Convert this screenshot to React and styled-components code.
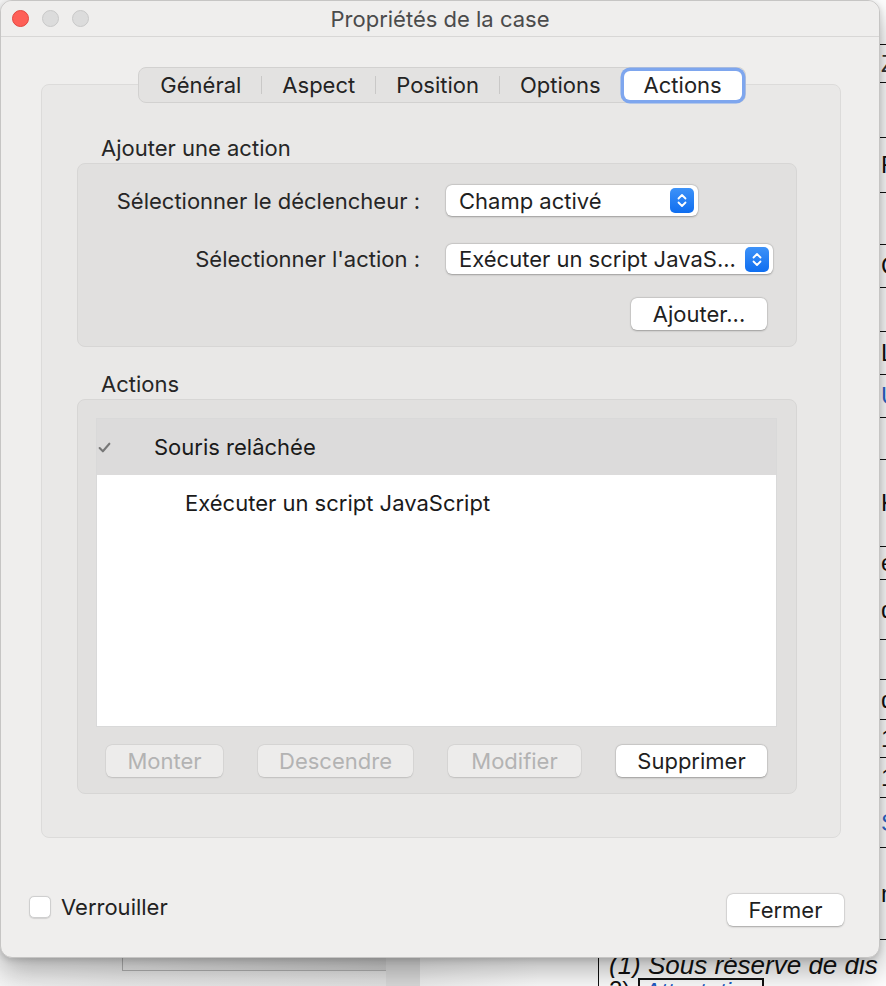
import React from 'react';
import styled, { createGlobalStyle } from 'styled-components';

const GlobalStyle = createGlobalStyle`
  html, body { margin: 0; padding: 0; }
  body {
    width: 886px;
    height: 986px;
    overflow: hidden;
    font-family: Inter, "Noto Sans", "Liberation Sans", sans-serif;
    -webkit-font-smoothing: antialiased;
  }
  * { box-sizing: border-box; }
`;

const Stage = styled.div`
  position: relative;
  width: 886px;
  height: 986px;
  overflow: hidden;
`;

/* ---------- background application (document behind the dialog) ---------- */
const Backdrop = styled.div`
  display: flex;
  height: 100%;
`;

const SidePane = styled.div`
  flex: none;
  width: 386px;
  padding-left: 122px;
  background: linear-gradient(to right, #f7f7f7 0, #ededed 122px, #e6e6e6 100%);
`;

const Frame = styled.div`
  height: 971px;
  border-left: 1.5px solid #b3b3b3;
  border-bottom: 1.5px solid #b3b3b3;
  background: linear-gradient(to right, #ececec, #d3d3d3);
`;

const Strip = styled.div`
  flex: none;
  width: 34px;
  background: #dddddd;
`;

const Doc = styled.div`
  flex: 1;
  min-width: 0;
  overflow: hidden;
  background: linear-gradient(to right, #f2f2f2, #ffffff 120px);
  padding-left: 178px;
`;

const DocTable = styled.div`
  height: 100%;
  border-left: 1.5px solid #111;
  background: #fff;
  display: flex;
  flex-direction: column;
`;

const DocRow = styled.div`
  flex: none;
  height: ${p => p.$h}px;
  border-bottom: ${p => (p.$line ? '1.5px solid #111' : 'none')};
  padding-left: ${p => p.$pad ?? 282}px;
  display: flex;
  align-items: ${p => p.$align || 'center'};
  white-space: nowrap;
  overflow: hidden;
  font-family: "Liberation Sans", Arial, sans-serif;
  font-size: ${p => p.$size || 24}px;
  line-height: 1;
  font-style: ${p => (p.$italic ? 'italic' : 'normal')};
  color: ${p => p.$color || '#111'};
`;

const NoteLink = styled.span`
  margin-left: 8px;
  border: 2px solid #111;
  border-bottom: none;
  padding: 0 4px;
  color: #1e5bc6;
  font-style: italic;
  text-decoration: underline;
`;

/* ---------- dialog window ---------- */
const Window = styled.div`
  position: absolute;
  top: 0;
  left: 0;
  width: 880px;
  height: 958px;
  background: #efeeed;
  border: 1px solid #c6c5c4;
  border-radius: 12px;
  box-shadow: 0 14px 30px rgba(0, 0, 0, 0.3), 0 2px 6px rgba(0, 0, 0, 0.15);
  display: flex;
  flex-direction: column;
  overflow: hidden;
  color: #242424;
`;

const TitleBar = styled.div`
  height: 36px;
  flex: none;
  display: grid;
  grid-template-columns: 1fr auto 1fr;
  align-items: center;
  border-bottom: 1px solid #d8d7d6;
  background: #efeeed;
`;

const Lights = styled.div`
  display: flex;
  gap: 13px;
  padding-left: 11px;
`;

const Light = styled.span`
  width: 17px;
  height: 17px;
  border-radius: 50%;
  background: ${p => p.$color};
  border: 1px solid ${p => p.$edge};
`;

const Title = styled.div`
  font-size: 22px;
  color: #4b4b4b;
`;

const Body = styled.div`
  flex: 1;
  display: flex;
  flex-direction: column;
  padding: 30px 38px 0 40px;
`;

const TabStrip = styled.div`
  display: flex;
  justify-content: center;
  margin-bottom: -19px;
  position: relative;
  z-index: 1;
`;

const Segmented = styled.div`
  display: flex;
  align-items: center;
  height: 36px;
  padding: 0 3px 0 1px;
  background: #e3e2e1;
  border: 1px solid #d2d1d0;
  border-radius: 8px;
  margin-left: 2px;
`;

const Tab = styled.div`
  height: 29px;
  padding: 0 20px;
  display: flex;
  align-items: center;
  font-size: 22px;
  color: #232323;
  border-radius: 6px;
  background: ${p => (p.$active ? '#ffffff' : 'transparent')};
  box-shadow: ${p => (p.$active ? '0 0 0 3.5px #7ea6ee, 0 1px 2px rgba(0,0,0,0.2)' : 'none')};
  margin-left: ${p => (p.$active ? '3px' : '0')};
`;

const TabDivider = styled.span`
  width: 1px;
  height: 18px;
  background: #c9c8c7;
`;

const Panel = styled.div`
  height: 754px;
  background: #e9e8e7;
  border: 1px solid #dcdbda;
  border-radius: 8px;
  padding: 51px 43px 0 35px;
  display: flex;
  flex-direction: column;
`;

const SectionLabel = styled.div`
  font-size: 22px;
  line-height: 24px;
  margin-left: 24px;
  margin-top: ${p => p.$top || 0}px;
  margin-bottom: 3px;
  color: #262626;
`;

const GroupBox = styled.div`
  background: #e1e0df;
  border: 1px solid #d7d6d5;
  border-radius: 8px;
  padding: ${p => p.$pad};
  display: flex;
  flex-direction: column;
`;

const FormRow = styled.div`
  display: grid;
  grid-template-columns: 342px auto;
  column-gap: 26px;
  align-items: center;
  margin-top: ${p => p.$top || 0}px;
`;

const FieldLabel = styled.div`
  text-align: right;
  font-size: 22px;
  color: #262626;
  white-space: nowrap;
`;

const Popup = styled.div`
  width: ${p => p.$w}px;
  height: ${p => p.$h}px;
  background: #fff;
  border-radius: 6px;
  box-shadow: 0 0.5px 2px rgba(0, 0, 0, 0.28), 0 0 0 0.5px rgba(0, 0, 0, 0.08);
  display: flex;
  align-items: center;
  justify-content: space-between;
  padding: 0 4px 0 13px;
  font-size: 22px;
  color: #1f1f1f;
  white-space: nowrap;
`;

const Stepper = styled.span`
  width: 24px;
  height: 25px;
  flex: none;
  border-radius: 5px;
  background: linear-gradient(#3d92f8, #0f6ef0);
  display: flex;
  align-items: center;
  justify-content: center;
`;

const RightRow = styled.div`
  display: flex;
  justify-content: flex-end;
  margin-top: ${p => p.$top || 0}px;
`;

const PushButton = styled.div`
  width: ${p => p.$w}px;
  height: 32px;
  border-radius: 6px;
  display: flex;
  align-items: center;
  justify-content: center;
  font-size: 22px;
  background: ${p => (p.$disabled ? '#edeceb' : '#ffffff')};
  color: ${p => (p.$disabled ? '#b3b3b3' : '#1f1f1f')};
  box-shadow: ${p =>
    p.$disabled
      ? '0 0.5px 1.5px rgba(0,0,0,0.12), 0 0 0 0.5px rgba(0,0,0,0.05)'
      : '0 0.5px 2px rgba(0,0,0,0.28), 0 0 0 0.5px rgba(0,0,0,0.08)'};
`;

const ActionList = styled.div`
  height: 309px;
  background: #fff;
  border: 1px solid #d9d9d9;
  display: flex;
  flex-direction: column;
`;

const ListRow = styled.div`
  height: 56px;
  flex: none;
  display: flex;
  align-items: center;
  padding-left: ${p => p.$indent}px;
  background: ${p => (p.$selected ? '#dcdbdb' : 'transparent')};
  font-size: 22px;
  color: #1a1a1a;
`;

const Check = styled.svg`
  width: 13px;
  height: 13px;
  margin-right: 43px;
`;

const ButtonRow = styled.div`
  display: flex;
  justify-content: space-between;
  padding: 0 10px;
  margin-top: 18px;
`;

const Footer = styled.div`
  display: flex;
  justify-content: space-between;
  align-items: center;
  margin: 56px -3px 0 -12px;
`;

const CheckLabel = styled.label`
  display: flex;
  align-items: center;
  gap: 10px;
  font-size: 22px;
  color: #222;
  margin-top: -6px;
`;

const CheckBox = styled.span`
  width: 22px;
  height: 22px;
  border-radius: 5px;
  background: #fff;
  border: 1px solid #cfcfcf;
  box-shadow: 0 0.5px 1px rgba(0, 0, 0, 0.12);
`;

const docRows = [
  { h: 45, ch: '' },
  { h: 38, ch: 'Z', color: '#333' },
  { h: 55, ch: '' },
  { h: 55, ch: 'F' },
  { h: 52, ch: '' },
  { h: 43, ch: 'C' },
  { h: 44, ch: '' },
  { h: 43, ch: 'L' },
  { h: 43, ch: 'U', color: '#2a66c9' },
  { h: 42, ch: '' },
  { h: 87, ch: 'K' },
  { h: 33, ch: 'é' },
  { h: 60, ch: 'd' },
  { h: 40, ch: '' },
  { h: 40, ch: 'd' },
  { h: 38, ch: '1' },
  { h: 40, ch: '1' },
  { h: 50, ch: 'S', color: '#2a66c9' },
  { h: 92, ch: 'n' },
];

const Chevrons = () => (
  <svg width="12" height="17" viewBox="0 0 12 17">
    <path d="M2.5 6.5 L6 3 L9.5 6.5" fill="none" stroke="#fff" strokeWidth="1.8" strokeLinecap="round" strokeLinejoin="round" />
    <path d="M2.5 10.5 L6 14 L9.5 10.5" fill="none" stroke="#fff" strokeWidth="1.8" strokeLinecap="round" strokeLinejoin="round" />
  </svg>
);

const tabs = ['Général', 'Aspect', 'Position', 'Options', 'Actions'];
const activeTab = 'Actions';

export default function App() {
  return (
    <Stage>
      <GlobalStyle />
      <Backdrop>
        <SidePane>
          <Frame />
        </SidePane>
        <Strip />
        <Doc>
          <DocTable>
            {docRows.map((r, i) => (
              <DocRow key={i} $h={r.h} $line $color={r.color}>
                {r.ch}
              </DocRow>
            ))}
            <DocRow $h={38} $pad={10} $italic $size={26} $align="flex-end">
              (1) Sous réserve de dis
            </DocRow>
            <DocRow $h={30} $pad={10} $size={24} $align="flex-start">
              2)<NoteLink>Attestation</NoteLink>
            </DocRow>
          </DocTable>
        </Doc>
      </Backdrop>

      <Window>
        <TitleBar>
          <Lights>
            <Light $color="#fe5f57" $edge="#e2463f" />
            <Light $color="#dcdcdc" $edge="#c8c8c8" />
            <Light $color="#dcdcdc" $edge="#c8c8c8" />
          </Lights>
          <Title>Propriétés de la case</Title>
          <span />
        </TitleBar>

        <Body>
          <TabStrip>
            <Segmented>
              {tabs.map((t, i) => {
                const next = tabs[i + 1];
                const showDivider = next && next !== activeTab && t !== activeTab;
                return (
                  <React.Fragment key={t}>
                    <Tab $active={t === activeTab}>{t}</Tab>
                    {showDivider && <TabDivider />}
                  </React.Fragment>
                );
              })}
            </Segmented>
          </TabStrip>

          <Panel>
            <SectionLabel>Ajouter une action</SectionLabel>
            <GroupBox $pad="21px 29px 16px 0">
              <FormRow>
                <FieldLabel>Sélectionner le déclencheur :</FieldLabel>
                <Popup $w={252} $h={31}>
                  Champ activé
                  <Stepper><Chevrons /></Stepper>
                </Popup>
              </FormRow>
              <FormRow $top={28}>
                <FieldLabel>Sélectionner l'action :</FieldLabel>
                <Popup $w={327} $h={30}>
                  Exécuter un script JavaS...
                  <Stepper><Chevrons /></Stepper>
                </Popup>
              </FormRow>
              <RightRow $top={24}>
                <PushButton $w={136}>Ajouter...</PushButton>
              </RightRow>
            </GroupBox>

            <SectionLabel $top={25}>Actions</SectionLabel>
            <GroupBox $pad="18px 19px 16px 18px">
              <ActionList>
                <ListRow $selected $indent={1}>
                  <Check viewBox="0 0 12 12">
                    <path d="M1.5 6.5 L4.5 9.5 L10.5 2.5" fill="none" stroke="#777" strokeWidth="1.9" strokeLinecap="round" strokeLinejoin="round" />
                  </Check>
                  Souris relâchée
                </ListRow>
                <ListRow $indent={88}>Exécuter un script JavaScript</ListRow>
              </ActionList>
              <ButtonRow>
                <PushButton $w={117} $disabled>Monter</PushButton>
                <PushButton $w={155} $disabled>Descendre</PushButton>
                <PushButton $w={133} $disabled>Modifier</PushButton>
                <PushButton $w={151}>Supprimer</PushButton>
              </ButtonRow>
            </GroupBox>
          </Panel>

          <Footer>
            <CheckLabel>
              <CheckBox />
              Verrouiller
            </CheckLabel>
            <PushButton $w={117}>Fermer</PushButton>
          </Footer>
        </Body>
      </Window>
    </Stage>
  );
}
